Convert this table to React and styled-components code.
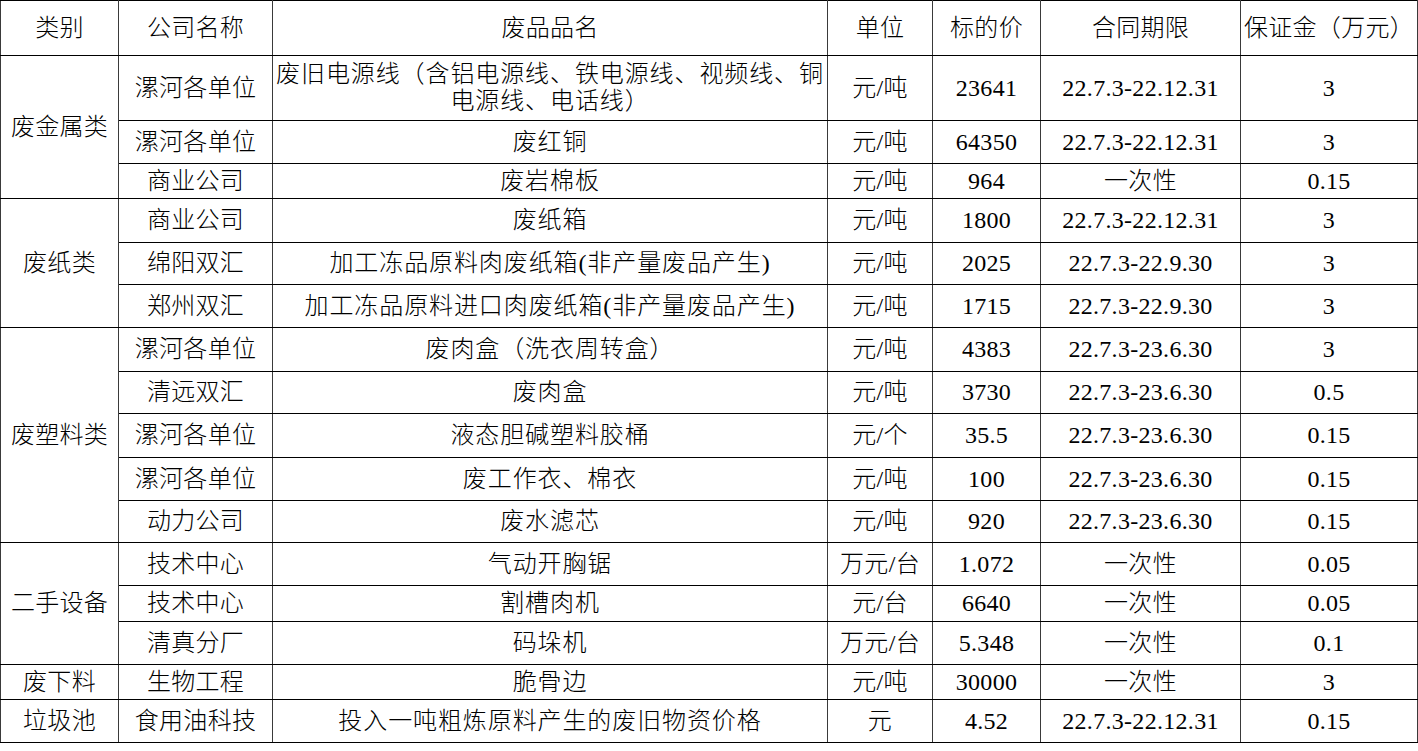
import React from "react";
import styled, { createGlobalStyle } from "styled-components";

const Global = createGlobalStyle`
  html, body { margin: 0; padding: 0; background: #fff; overflow: hidden; }
  body { font-family: "Liberation Serif", "Noto Sans CJK SC", serif; color: #000; }
`;

const Sheet = styled.table`
  border-collapse: collapse;
  table-layout: fixed;
  width: 1417px;
  font-size: 24px;
  line-height: 27px;
  letter-spacing: 0.3px;
`;

const Col = styled.col`
  width: ${(p) => p.$w}px;
`;

const Row = styled.tr`
  height: ${(p) => p.$h}px;
`;

const Cell = styled.td`
  border-top: 1px solid #000;
  border-bottom: 1px solid #000;
  border-left: 1px solid #3a3a3a;
  border-right: 1px solid #3a3a3a;
  padding: 0 ${(p) => (p.$wide ? 2 : 0)}px;
  letter-spacing: ${(p) => (p.$wide ? "0.9px" : "inherit")};
  text-align: center;
  vertical-align: middle;
  white-space: ${(p) => (p.$wide ? "normal" : "nowrap")};
  overflow: visible;
  font-weight: 300;
`;

const HeadCell = styled(Cell).attrs({ as: "th" })``;

const widths = [118, 154, 555, 105, 108, 200, 177];

const groups = [
  {
    name: "废金属类",
    rows: [
      ["漯河各单位", "废旧电源线（含铝电源线、铁电源线、视频线、铜电源线、电话线）", "元/吨", "23641", "22.7.3-22.12.31", "3", 65],
      ["漯河各单位", "废红铜", "元/吨", "64350", "22.7.3-22.12.31", "3", 43],
      ["商业公司", "废岩棉板", "元/吨", "964", "一次性", "0.15", 35],
    ],
  },
  {
    name: "废纸类",
    rows: [
      ["商业公司", "废纸箱", "元/吨", "1800", "22.7.3-22.12.31", "3", 44],
      ["绵阳双汇", "加工冻品原料肉废纸箱(非产量废品产生)", "元/吨", "2025", "22.7.3-22.9.30", "3", 42],
      ["郑州双汇", "加工冻品原料进口肉废纸箱(非产量废品产生)", "元/吨", "1715", "22.7.3-22.9.30", "3", 43],
    ],
  },
  {
    name: "废塑料类",
    rows: [
      ["漯河各单位", "废肉盒（洗衣周转盒）", "元/吨", "4383", "22.7.3-23.6.30", "3", 44],
      ["清远双汇", "废肉盒", "元/吨", "3730", "22.7.3-23.6.30", "0.5", 42],
      ["漯河各单位", "液态胆碱塑料胶桶", "元/个", "35.5", "22.7.3-23.6.30", "0.15", 44],
      ["漯河各单位", "废工作衣、棉衣", "元/吨", "100", "22.7.3-23.6.30", "0.15", 43],
      ["动力公司", "废水滤芯", "元/吨", "920", "22.7.3-23.6.30", "0.15", 42],
    ],
  },
  {
    name: "二手设备",
    rows: [
      ["技术中心", "气动开胸锯", "万元/台", "1.072", "一次性", "0.05", 43],
      ["技术中心", "割槽肉机", "元/台", "6640", "一次性", "0.05", 36],
      ["清真分厂", "码垛机", "万元/台", "5.348", "一次性", "0.1", 43],
    ],
  },
  {
    name: "废下料",
    rows: [["生物工程", "脆骨边", "元/吨", "30000", "一次性", "3", 35]],
  },
  {
    name: "垃圾池",
    rows: [["食用油科技", "投入一吨粗炼原料产生的废旧物资价格", "元", "4.52", "22.7.3-22.12.31", "0.15", 43]],
  },
];

const headers = ["类别", "公司名称", "废品品名", "单位", "标的价", "合同期限", "保证金（万元）"];

export default function App() {
  return (
    <>
      <Global />
      <Sheet>
        <colgroup>
          {widths.map((w, i) => (
            <Col key={i} $w={w} />
          ))}
        </colgroup>
        <thead>
          <Row $h={55}>
            {headers.map((h) => (
              <HeadCell key={h}>{h}</HeadCell>
            ))}
          </Row>
        </thead>
        <tbody>
          {groups.map((g) =>
            g.rows.map((r, i) => (
              <Row key={g.name + i} $h={r[6]}>
                {i === 0 && <Cell rowSpan={g.rows.length}>{g.name}</Cell>}
                <Cell>{r[0]}</Cell>
                <Cell $wide>{r[1]}</Cell>
                <Cell>{r[2]}</Cell>
                <Cell>{r[3]}</Cell>
                <Cell>{r[4]}</Cell>
                <Cell>{r[5]}</Cell>
              </Row>
            ))
          )}
        </tbody>
      </Sheet>
    </>
  );
}
